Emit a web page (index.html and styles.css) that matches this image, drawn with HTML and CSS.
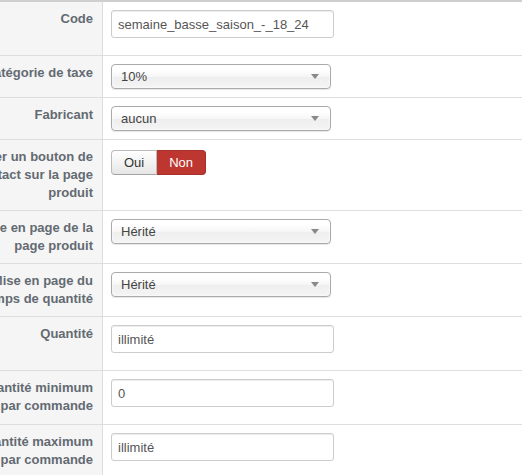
FILE: index.html
```html
<!DOCTYPE html>
<html>
<head>
    <meta charset="utf-8">
    <meta name="viewport" content="width=device-width, initial-scale=1.0">
    <link rel="stylesheet" href="styles.css">
</head>
<body>

<div class="admintable">
    <div class="row">
        <div class="key"><label for="product_sku">Code</label></div>
        <div class="field">
            <input type="text" class="inputbox" id="product_sku" value="semaine_basse_saison_-_18_24">
        </div>
    </div>
    <div class="row">
        <div class="key"><label>Catégorie de taxe</label></div>
        <div class="field">
            <div class="chzn-single"><span>10%</span><b></b></div>
        </div>
    </div>
    <div class="row">
        <div class="key"><label>Fabricant</label></div>
        <div class="field">
            <div class="chzn-single"><span>aucun</span><b></b></div>
        </div>
    </div>
    <div class="row">
        <div class="key"><label>Afficher un bouton de<br>contact sur la page<br>produit</label></div>
        <div class="field">
            <div class="btn-group">
                <button type="button" class="btn">Oui</button>
                <button type="button" class="btn btn-danger">Non</button>
            </div>
        </div>
    </div>
    <div class="row">
        <div class="key"><label>Mise en page de la<br>page produit</label></div>
        <div class="field">
            <div class="chzn-single"><span>Hérité</span><b></b></div>
        </div>
    </div>
    <div class="row">
        <div class="key"><label>Mise en page du<br>champs de quantité</label></div>
        <div class="field">
            <div class="chzn-single"><span>Hérité</span><b></b></div>
        </div>
    </div>
    <div class="row">
        <div class="key"><label for="quantity">Quantité</label></div>
        <div class="field">
            <input type="text" class="inputbox" id="quantity" value="illimité">
        </div>
    </div>
    <div class="row">
        <div class="key"><label for="min_order">Quantité minimum<br>par commande</label></div>
        <div class="field">
            <input type="text" class="inputbox" id="min_order" value="0">
        </div>
    </div>
    <div class="row">
        <div class="key"><label for="max_order">Quantité maximum<br>par commande</label></div>
        <div class="field">
            <input type="text" class="inputbox" id="max_order" value="illimité">
        </div>
    </div>
</div>

</body>
</html>
```

FILE: styles.css
```css
* {
    box-sizing: border-box;
}

body {
    margin: 0;
    font-family: "Liberation Sans", Arial, sans-serif;
    font-size: 13px;
    background-color: #ffffff;
}

.admintable {
    border-top: 2px solid #cfcfcf;
}

.row {
    display: grid;
    grid-template-columns: 103px 1fr;
    border-bottom: 1px solid #dddddd;
}

.key {
    display: flex;
    justify-content: flex-end;
    padding: 8px 9px 8px 0;
    background-color: #f5f5f5;
    border-right: 1px solid #dddddd;
    text-align: right;
    white-space: nowrap;
}

.key label {
    font-weight: bold;
    line-height: 18px;
    color: #636a72;
}

.field {
    padding: 8px 8px;
}

.inputbox {
    display: block;
    width: 223px;
    height: 28px;
    margin: 0 0 9px;
    padding: 4px 6px;
    border: 1px solid #cccccc;
    border-radius: 3px;
    box-shadow: inset 0 1px 1px rgba(0, 0, 0, 0.075);
    font-family: inherit;
    font-size: 13px;
    line-height: 18px;
    color: #555555;
}

/* chosen style dropdown */
.chzn-single {
    display: flex;
    align-items: center;
    justify-content: space-between;
    width: 220px;
    height: 25px;
    padding: 0 11px 0 9px;
    border: 1px solid #aaaaaa;
    border-radius: 4px;
    background: linear-gradient(#ffffff 20%, #f6f6f6 50%, #eeeeee 52%, #f4f4f4 100%);
    box-shadow: inset 0 0 3px #ffffff, 0 1px 1px rgba(0, 0, 0, 0.1);
    color: #444444;
    line-height: 23px;
}

.chzn-single b {
    width: 0;
    height: 0;
    border-left: 4px solid transparent;
    border-right: 4px solid transparent;
    border-top: 5px solid #888888;
}

.btn-group {
    display: flex;
    margin-top: 2px;
}

.btn {
    height: 25px;
    padding: 3px 12px;
    border: 1px solid #bbbbbb;
    border-bottom-color: #a2a2a2;
    background: linear-gradient(#ffffff, #e6e6e6);
    font-family: inherit;
    font-size: 13px;
    line-height: 17px;
    color: #333333;
    cursor: pointer;
}

.btn:first-child {
    border-radius: 4px 0 0 4px;
}

.btn:last-child {
    border-left: none;
    border-radius: 0 4px 4px 0;
}

.btn-danger {
    background: #bd362f;
    border-color: #a6302a;
    color: #ffffff;
}
```
